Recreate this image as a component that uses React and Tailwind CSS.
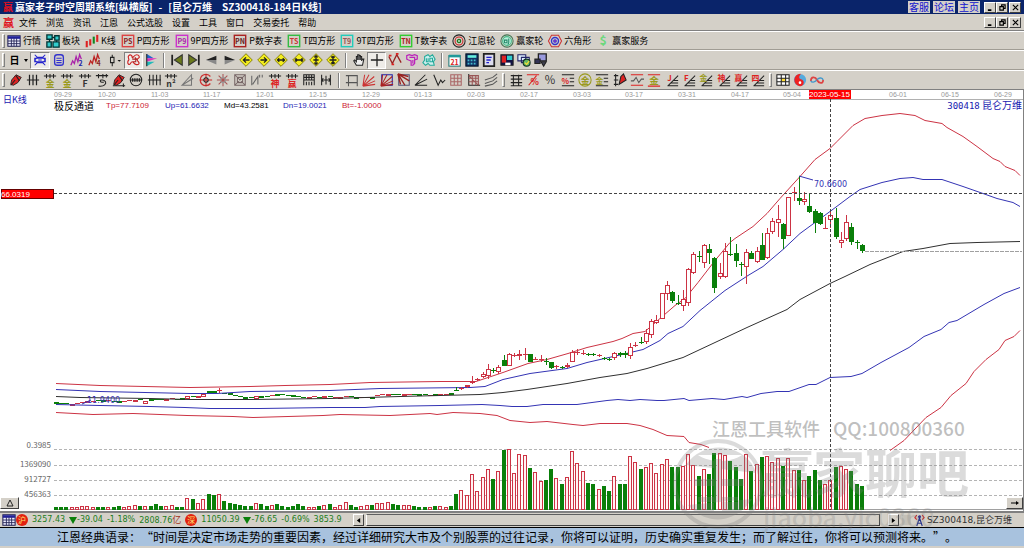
import clsx from 'clsx';

const RED = '#cc3344';
const GREEN = '#0a7f0a';
const BLUE = '#3434b4';

/* ---------- data ---------- */

const MENU = ['文件', '浏览', '资讯', '江恩', '公式选股', '设置', '工具', '窗口', '交易委托', '帮助'];

// volume per bar: positive = up day, negative = down day
const VOLUME = [
  -7, -7, -6, 7, 7, 9, 9, 7, -7, -7, 7, -5, -10, 7, 8, 12, -9, 9, -10, -15, -8, 8, 12, -6, -6,
  32, -30, 18, 30, -44, -42, 44, -24, -17, -14, -11, -9, -8, 18, -15, -10, 12, -16, -10, -7, -10,
  -15, -8, 7, 7, -9, 11, -15, 6, 11, 21, -11, -7, 8, 12, -13, 18, 18, 21, -16, -13, 12, 12, -10,
  -7, -5, 6, -8, 10, 7, -10, -46, 58, 43, 106, 55, 97, 119, -89, 115, -176, 181, 109, 166, 163,
  -124, 112, 85, -86, -119, 94, -74, 97, 173, 139, 115, -79, -74, 61, -70, -53, 100, -74, -74,
  158, 142, -119, 127, 137, 109, 134, 151, -127, -127, 129, 165, 132, -98, 120, -106, -169, 168,
  163, -144, -127, -90, 166, -115, 134, -157, 159, 141, 154, -128, 153, 118, -116, 88, -98, -118,
  -88, 76, 87, -125, 128, 120, -115, -76, -69,
];

// the sideways stretch, one level per bar
const FLAT = [
  697, 698, 700, 701, 698, 695, 694, 693, 691, 690, 690, 692, 693, 694, 691, 689, 687, 694, 688,
  686, 686, 686, 684, 687, 685, 679, 677, 678, 673, 664, 664, 661, 668, 670, 674, 677, 680, 681,
  678, 678, 677, 675, 671, 673, 674, 675, 677, 682, 681, 679, 680, 679, 678, 680, 681, 677, 678,
  680, 680, 680, 681, 676, 672, 673, 671, 671, 671, 671, 672, 672, 673, 675, 673, 672, 671, 670,
];

// high, body top, body bottom, low
const CANDLES = [
  [652, 661, 663, 664], [650, 653, 658, 659], [644, 646, 652, 653], [619, 632, 640, 642],
  [624, 627, 631, 632], [607, 613, 620, 624], [583, 598, 619, 626], [593, 599, 602, 610],
  [585, 591, 605, 612], [554, 571, 587, 588], [548, 553, 587, 588], [548, 555, 557, 562],
  [540, 552, 557, 571], [533, 553, 555, 570], [552, 553, 575, 576], [560, 566, 568, 570],
  [555, 567, 569, 575], [565, 572, 576, 585], [575, 577, 593, 596], [584, 587, 590, 596],
  [587, 591, 593, 596], [580, 584, 592, 594], [540, 546, 575, 577], [538, 547, 549, 555],
  [540, 548, 552, 556], [548, 552, 554, 558], [550, 553, 555, 558], [553, 556, 558, 560],
  [560, 564, 566, 570], [564, 568, 570, 572], [545, 550, 564, 570], [546, 550, 555, 560],
  [542, 550, 555, 563], [520, 532, 557, 568], [515, 525, 528, 531], [502, 515, 518, 522],
  [478, 490, 517, 521], [447, 454, 496, 503], [436, 450, 458, 462], [368, 370, 446, 448],
  [333, 346, 373, 390], [364, 365, 394, 398], [376, 399, 401, 405], [360, 388, 408, 423],
  [295, 298, 400, 408], [247, 253, 310, 312], [243, 259, 262, 277], [222, 224, 280, 293],
  [222, 238, 250, 282], [262, 265, 353, 370], [278, 308, 322, 328], [220, 242, 322, 323],
  [200, 252, 256, 258], [223, 250, 273, 290], [277, 281, 285, 318], [238, 247, 292, 343],
  [244, 248, 266, 268], [232, 244, 277, 278], [190, 225, 270, 271], [173, 190, 265, 266],
  [144, 152, 187, 193], [105, 148, 158, 200], [160, 163, 206, 237], [80, 82, 198, 199],
  [50, 66, 68, 92], [18, 84, 94, 104], [66, 87, 95, 106], [72, 107, 127, 130],
  [117, 123, 160, 190], [125, 129, 162, 165], [142, 173, 175, 178], [120, 136, 151, 175],
  [115, 144, 200, 208], [185, 210, 218, 235], [136, 156, 208, 212], [158, 170, 215, 225],
  [210, 217, 220, 236], [222, 226, 243, 250],
];

const barX = i => Math.round(55.7 + i * 5.27);
const priceY = v => Math.round(170 + v / 3);

const CURVES = [
  { id: 'Tp', color: RED, points: '56,383 100,385 190,387 250,386 285,385 330,384 370,382 440,381 476,381 503,372 528,363 547,359 568,353 587,347 613,341 622,338 633,333 645,331 660,318 675,305 685,298 698,282 715,260 730,242 735,238 753,226 767,213 780,198 800,176 815,159 830,148 837,141 853,125 865,118 882,115 900,113 915,115 925,120 942,123 947,127 963,136 977,146 993,158 1000,161 1005,166 1015,170 1020,175' },
  { id: 'Up', color: BLUE, points: '56,389 100,391 190,393 217,393 250,391 330,390 380,388 470,387 485,386 503,379 530,373 567,368 587,362 622,354 643,349 660,340 668,333 683,326 700,310 725,290 748,275 763,266 783,249 800,233 830,211 850,196 860,189 882,182 900,178 913,177 923,179 942,179 963,186 983,193 997,198 1013,202 1020,206' },
  { id: 'Md', color: '#303030', points: '56,396 80,397 150,398 190,399 250,399 330,398 400,396 480,394 503,392 527,389 567,383 600,377 627,373 647,368 683,357 747,327 787,309 800,299 830,283 845,276 870,264 903,251 923,248 950,243 977,242 1020,241' },
  { id: 'Dn', color: BLUE, points: '56,404 100,405 150,406 185,407 210,408 260,408 330,407 365,407 380,406 440,405 482,404 500,405 512,406 527,406 543,404 577,404 607,400 618,399 630,400 640,399 657,400 664,400 684,398 689,400 712,398 724,399 742,396 747,397 761,393 777,391 789,391 809,384 816,384 830,377 851,376 862,373 881,362 909,347 924,336 941,329 949,322 957,320 984,304 1004,293 1020,287' },
  { id: 'Bt', color: RED, points: '56,412 93,414 133,413 187,415 233,416 253,417 323,415 340,414 390,415 410,414 430,413 437,414 453,412 480,413 497,415 510,420 530,422 547,421 573,424 583,425 600,423 627,423 640,425 653,429 667,435 684,436 689,442 701,444 709,447' },
  { id: 'Bt2', color: RED, points: '890,450 904,440 926,417 941,407 951,395 966,383 974,371 986,359 999,349 1005,340 1014,336 1020,330' },
];

const DATES = [
  [54, '09-29'], [98, '10-20'], [151, '11-03'], [203, '11-17'], [256, '12-01'], [309, '12-15'],
  [362, '12-29'], [414, '01-13'], [467, '02-03'], [520, '02-17'], [573, '03-03'], [625, '03-17'],
  [678, '03-31'], [731, '04-17'], [783, '05-04'], [889, '06-01'], [941, '06-15'], [994, '06-29'],
];

const VOL_TICKS = [[449, '0.3985'], [465, '1369090'], [480, '912727'], [495, '456363']];

/* ---------- icons ---------- */

function Ico({ children }) {
  return (
    <svg viewBox="0 0 16 16" className="size-[14px] shrink-0 overflow-visible" fill="none" stroke="#222" strokeWidth="1.2">
      {children}
    </svg>
  );
}

function Glyph({ x = 8, y = 15, size = 9, fill = '#d22', children }) {
  return (
    <text x={x} y={y} fontSize={size} fill={fill} stroke="none" textAnchor="middle" fontWeight="700">{children}</text>
  );
}

const tagIcon = (label, color, ink) => (
  <Ico>
    <rect x="1.5" y="1.5" width="13" height="13" stroke={color} strokeWidth="1.6" />
    <Glyph y={11.5} size={8} fill={ink}>{label}</Glyph>
  </Ico>
);
const diamond = d => (
  <Ico>
    <path d="M8 .8L15.2 8 8 15.2.8 8z" fill="#f4ee1e" stroke="#7a7400" strokeWidth="1" />
    <path d={d} stroke="#222" strokeWidth="1.5" />
  </Ico>
);
const topRule = (ch, fill) => (
  <Ico>
    <path d="M1 3.5h14M4 1v5M8 1v5M12 1v5" />
    <Glyph y={15.5} size={10} fill={fill}>{ch}</Glyph>
  </Ico>
);
const slanted = (ch, fill) => (
  <Ico>
    <path d="M3 15L15 3M4 14.5h11M7 11.5h8M10 8.500h5" />
    <Glyph x={5} y={9} size={9} fill={fill}>{ch}</Glyph>
  </Ico>
);
const pen = (
  <>
    <path d="M2 13l1-5 5-6 6 3-4 6-5 3z" fill="#d22" stroke="#222" strokeWidth="1" />
    <path d="M2 14l5-6M8 3l4 6" />
  </>
);
const fan = 'M1 15L3 2M1 15L8 2M1 15L14 4M1 15L15 9M1 15L15 13';

const PAGE_BAR = [
  ['行情', <Ico key="i"><rect x="1" y="2" width="14" height="12" fill="#eef" stroke="#225" /><path d="M1 4h14" stroke="#229" strokeWidth="3" /><path d="M1 8h14M1 11h14M5 5v9M8 5v9M11 5v9" stroke="#225" strokeWidth="1" /></Ico>],
  ['板块', <Ico key="i"><path d="M1 1h6v5H1zM10 2h5v5h-5zM1 9h5v6H1zM8 9h7v6H8z" fill="#3cc" stroke="#033" strokeWidth="1.500" /><path d="M7 4h3M4 6v3M12 7v2" stroke="#033" strokeWidth="1.500" /></Ico>],
  ['K线', <Ico key="i"><path d="M2 8v7M6 6v7" stroke="#d22" strokeWidth="2.400" /><path d="M10 3v8" stroke="#182" strokeWidth="2.400" /><path d="M14 1v8" stroke="#d22" strokeWidth="2.400" /></Ico>],
  ['P四方形', tagIcon('PS', '#d44', '#822')],
  ['9P四方形', tagIcon('P9', '#c3c', '#a2a')],
  ['P数字表', tagIcon('PN', '#a22', '#622')],
  ['T四方形', tagIcon('TS', '#3b4', '#c33')],
  ['9T四方形', tagIcon('T9', '#2cb', '#955')],
  ['T数字表', tagIcon('TN', '#3c3', '#a22')],
  ['江恩轮', <Ico key="i"><circle cx="8" cy="8" r="7" /><circle cx="8" cy="8" r="4.500" stroke="#c22" /><circle cx="8" cy="8" r="2" stroke="#161" fill="#9c9" /></Ico>],
  ['赢家轮', <Ico key="i"><circle cx="8" cy="8" r="7" stroke="#475" /><circle cx="8" cy="8" r="5" stroke="#4b8" fill="#bed" /><path d="M5 7h3v3H5zM10 5v5l-1 2" stroke="#286" /></Ico>],
  ['六角形', <Ico key="i"><path d="M4 1.500h8L15.500 8 12 14.500H4L.5 8z" stroke="#c33" /><circle cx="8" cy="8" r="4" stroke="#33c" strokeWidth="1.600" /><circle cx="8" cy="8" r="1.500" fill="#c3c" stroke="#33c" /></Ico>],
  ['赢家服务', <Ico key="i"><Glyph y={13} size={14} fill="#6cd87c">$</Glyph></Ico>],
];

const NAV_GROUPS = [
  {
    width: 'w-[74px]',
    items: [
      ['指标窗口', <Ico key="i"><path d="M2 2l3 3h6l3-3M2 14l3-3h6l3 3M2 6v4h12V6zM5 5L2 8M11 5l3 3M6 8h4M5 11l-3-3M11 11l3-3" stroke="#22c" strokeWidth="1.200" /></Ico>, true],
      ['资料', <Ico key="i"><rect x="3" y="2" width="10" height="12" rx="3" stroke="#33c" strokeWidth="1.500" /><path d="M5 6h6M5 8.500h6M5 11h6" stroke="#33c" /></Ico>],
      ['二波段', <Ico key="i"><path d="M1 14l2-5 2 3 2-8 2 6 2-8 2 5" stroke="#a2a" strokeWidth="1.500" /><Glyph x={12} y={15} size={8} fill="#22a">2</Glyph></Ico>],
      ['四波段', <Ico key="i"><path d="M1 14l2-5 2 3 2-8 2 6 2-8 2 5" stroke="#b22" strokeWidth="1.500" /><Glyph x={12} y={15} size={8} fill="#822">4</Glyph></Ico>],
    ],
  },
  { width: 'w-[20px]', items: [['K线样式', <Ico key="i"><path d="M6 2v3M6 11v4M4 5h4v6H4z" /><path d="M12 8h4l-2 2z" fill="#111" stroke="none" /></Ico>]] },
  {
    width: 'w-[36px]',
    items: [
      ['极反通道', <Ico key="i"><path d="M2 3c2-2 4 0 4 2s2-3 5-3 4 3 2 4-2 2 0 4 0 4-3 3-2-3-4-3-2 4-4 3-1-4 0-5-2-3 0-5z" stroke="#c22" strokeWidth="1.300" /><path d="M6 7h4v3H7M9 5l3 3" stroke="#a22" /></Ico>, true],
      ['筹码分布', <Ico key="i"><path d="M2 1l8 5H2z" fill="#26c" stroke="none" /><path d="M2 6h12L2 10z" fill="#d3b" stroke="none" /><path d="M2 10h9l-9 5z" fill="#2bb" stroke="none" /><path d="M2 1v14" /></Ico>],
    ],
  },
  {
    width: 'w-[174px]',
    lead: true,
    items: [
      ['首页', <Ico key="i"><path d="M14 2v12L5 8z" fill="#6b7a1c" stroke="#333" /><path d="M2.500 2v12" strokeWidth="2" /></Ico>],
      ['末页', <Ico key="i"><path d="M2 2v12l9-6z" fill="#6b7a1c" stroke="#333" /><path d="M13.500 2v12" strokeWidth="2" /></Ico>],
      ['左移', <Ico key="i"><path d="M13 3v5H1z" fill="#222" stroke="none" /><path d="M1 8h12v5z" fill="#888" stroke="none" /></Ico>],
      ['右移', <Ico key="i"><path d="M3 3v5h12z" fill="#222" stroke="none" /><path d="M15 8H3v5z" fill="#888" stroke="none" /></Ico>],
      ['左一格', diamond('M12 8H5M8 5L5 8l3 3')],
      ['右一格', diamond('M4 8h7M8 5l3 3-3 3')],
      ['横向放大', diamond('M3.500 8h9M6 6L4 8l2 2M10 6l2 2-2 2')],
      ['横向缩小', diamond('M3 8h10M4 6l2 2-2 2M12 6l-2 2 2 2')],
      ['纵向放大', diamond('M8 3v10M6 5l2-2 2 2M6 11l2 2 2-2M5 8h6')],
      ['纵向缩小', diamond('M8 3v10M6 4l2 2 2-2M6 12l2-2 2 2M4 8h8')],
    ],
  },
  {
    width: 'w-[88px]',
    lead: true,
    items: [
      ['拖动', <Ico key="i"><path d="M5 14L2 9l1-1 2 2V4h1.500v4V2H8v6V3h1.500v5V4H11v5l1-2h1.500L12 14z" fill="#eee" /></Ico>],
      ['十字光标', <Ico key="i"><path d="M8 1v14M1 8h14" strokeWidth="1.500" /></Ico>, true],
      ['折线', <Ico key="i"><path d="M1 4l4 8 5-10 5 9" stroke="#922" strokeWidth="1.500" /><path d="M1 3h3M4 13h3M9 1h3" stroke="#d22" strokeWidth="2" /></Ico>],
      ['形态', <Ico key="i"><path d="M2 3l3-1 3 1 3-1 3 1v4l-3 1v4l-2 2H7V9L4 8 2 7zM5 5h6v2M9 8v4" stroke="#b2b" strokeWidth="1.400" /></Ico>],
      ['叠加', <Ico key="i"><path d="M3 4l4-2 2 2 3-2 3 5-2 3 1 4H9l-2-2-3 2-3-3 2-3z" stroke="#2a9" fill="#cee" /><path d="M5 6v4h2V6M9 6h3v4H9z" stroke="#2a9" /></Ico>],
    ],
  },
  {
    width: 'w-[104px]',
    lead: true,
    items: [
      ['日历', <Ico key="i"><rect x="1" y="3" width="13" height="12" fill="#fff" stroke="#277" /><path d="M1 3.500h13" stroke="#299" strokeWidth="3" /><Glyph x={7.5} y={13.5} size={8}>21</Glyph></Ico>],
      ['计算器', <Ico key="i"><rect x="1" y="1" width="14" height="14" fill="#136" stroke="#012" /><path d="M3 4h10" stroke="#6ed" strokeWidth="3" /><path d="M3 8.500h10M3 12h10" stroke="#4bc" strokeWidth="2" strokeDasharray="2 1.500" /></Ico>],
      ['笔记', <Ico key="i"><rect x="2" y="1" width="12" height="14" fill="#dde" strokeWidth="2" /><path d="M5 5h6M5 8h5M5 11h3" stroke="#22c" strokeWidth="1.500" /></Ico>],
      ['保存', <Ico key="i"><path d="M1 2h14v12H1z" fill="#114" /><path d="M2 3h5v8H2z" fill="#d22" stroke="none" /><path d="M8 3h6v5H8z" fill="#3cc" stroke="none" /><path d="M6 11h6v3H6z" fill="#fff" stroke="none" /></Ico>],
      ['导出', <Ico key="i"><path d="M1 2h9v7H1zM5 5h9v6H5z" fill="#def" stroke="#226" /><circle cx="11" cy="11" r="4" fill="#6b6" stroke="#132" /><path d="M9 11l2 2 3-4" stroke="#fd3" /></Ico>],
      ['远程', <Ico key="i"><path d="M5 1h9v8H5z" fill="#99d" strokeWidth="1.500" /><path d="M1 7h6v5H1z" fill="#335" /><path d="M8 10h6l-3 5z" fill="#445" /></Ico>],
    ],
  },
];

const DRAW_GROUPS = [
  {
    width: 'w-[328px]',
    items: [
      ['画笔', <Ico key="i">{pen}</Ico>],
      ['等分线', <Ico key="i"><path d="M1 8h14M4 2v12M8 2v12M12 2v12" strokeWidth="1.400" /></Ico>],
      ['黄金分割', topRule('金', '#9a9a1e')],
      ['黄金周期', topRule('金', '#9a9a1e')],
      ['斐波那契', topRule('F', '#333')],
      ['螺旋', <Ico key="i"><path d="M1 3h14M4 1v5M9 1v5M13 1v4M4 15c7 1 9-3 8-5S6 7 6 9s4 2 4 1" /></Ico>],
      ['标注', <Ico key="i">{pen}<path d="M1 14.500h14M13 12v4" /></Ico>],
      ['圆周', <Ico key="i"><circle cx="8" cy="8" r="6.500" /><path d="M1 8h14M4 6v4M6 6v4M8 6v4M10 6v4M12 6v4" /></Ico>],
      ['周期线', <Ico key="i"><path d="M1 8h15M3 2v12M7 2v12M11 2v12M15 2v12" /></Ico>],
      ['平方', topRule('n²', '#333')],
      ['三角', <Ico key="i"><path d="M1 14L12 2v12zM1 14l13-8" stroke="#777" /></Ico>],
      ['江恩圆', <Ico key="i"><path d="M13 12a6.500 6.500 0 110-8" stroke="#c33" strokeWidth="1.400" /><path d="M1 8h14M8 1v14" stroke="#c22" /><circle cx="8" cy="8" r="2.500" /></Ico>],
      ['星形', <Ico key="i"><path d="M8 1v14M1 8h14M3 3l10 10M13 3L3 13" stroke="#a55" /><circle cx="8" cy="8" r="3" stroke="#999" /></Ico>],
      ['方形', <Ico key="i"><path d="M2 2h12v12H2zM5 5h6v6H5zM2 2l12 12M14 2L2 14" stroke="#766" /></Ico>],
      ['波浪', <Ico key="i"><path d="M2 14V3M3 13l6-9v9M11 2v3M14 2v3" stroke="#666" /></Ico>],
      ['神数', topRule('神', '#d22')],
      ['赢数', topRule('赢', '#d22')],
      ['箱体', <Ico key="i"><path d="M2 14V2h12v12M2 8h12M2 5h12M5 2v6M8 2v6M11 2v6M5 10v4M8 10v4M11 10v4" /></Ico>],
      ['间距', <Ico key="i"><path d="M3 2v12M13 2v12M8 3v10M3 8h10M5 6L3 8l2 2M11 6l2 2-2 2" /></Ico>],
    ],
  },
  {
    width: 'w-[157px]',
    lead: true,
    items: [
      ['矩形', <Ico key="i"><path d="M4 3h10v8H4zM1 3h3M4 11v4M1 11h3M14 11v4" stroke="#555" /></Ico>],
      ['扇形线', <Ico key="i"><path d={fan} stroke="#c33" /></Ico>],
      ['速阻线', <Ico key="i"><path d="M2 2h12v12H2z" stroke="#22a" /><path d={fan} stroke="#a22" /></Ico>],
      ['反向扇形', <Ico key="i"><path d="M2 2h12v12H2z" stroke="#557" /><path d="M1 1l12 3M1 1l13 8M1 1l8 13M1 1l3 12" stroke="#922" strokeWidth="1.600" /></Ico>],
      ['角度线', <Ico key="i"><path d="M1 14L13 2M1 14L15 7M1 14h14" /></Ico>],
      ['折返', <Ico key="i"><path d="M2 2l5 12 3-6 2 3 3-3" /></Ico>],
      ['网格', <Ico key="i"><path d="M2 2h12v12H2zM6 2v12M10 2v12M2 6h12M2 10h12" stroke="#a66" /></Ico>],
      ['斜网格', <Ico key="i"><path d="M2 1v13h13" /><path d="M2 3h11v11M6 3v11M10 3v11M2 6h11M2 10h11M2 3l11 11" stroke="#955" /></Ico>],
      ['平行线', <Ico key="i"><path d="M1 8l9-3 5-4M1 12l9-3 5-4M1 15l9-2 5-4" stroke="#555" /></Ico>],
    ],
  },
  {
    width: 'w-[260px]',
    grip: true,
    items: [
      ['水平等分', <Ico key="i"><path d="M2 3h13M2 7h13M2 11h13M2 14.500h13M5 2v13M11 2v13" /></Ico>],
      ['百分比线', <Ico key="i"><path d="M1 2h14M3 14L12 3" stroke="#d22" /><Glyph x={10} y={14} size={10}>%</Glyph></Ico>],
      ['百分比', <Ico key="i"><text x="8" y="13" fontSize="13" fill="#333" stroke="none" textAnchor="middle">%</text></Ico>],
      ['百分回撤', <Ico key="i"><path d="M1 2h14M10 6h5M10 10h5M1 14.500h14" /><Glyph x={5} y={12} size={9}>%</Glyph></Ico>],
      ['黄金圆', <Ico key="i"><circle cx="8" cy="8" r="7" stroke="#9a9a1e" /><Glyph y={12} size={10} fill="#9a9a1e">金</Glyph></Ico>],
      ['黄金回撤', <Ico key="i"><path d="M1 2h14M10 6h5M10 10h5M1 14.500h14" /><Glyph x={5} y={12} size={9} fill="#9a9a1e">金</Glyph></Ico>],
      ['标尺', <Ico key="i"><path d="M3 1v14M1 3h5M1 8h5M1 13h5" /><path d="M7 13l2-9 3-3 3 7z" fill="#d22" /></Ico>],
      ['波动', <Ico key="i"><path d="M1 2h14M1 14h14" stroke="#d22" /><path d="M1 9h3l3-4 3 6 3-4h3" stroke="#555" /></Ico>],
      ['黄金区间', <Ico key="i"><path d="M1 2h14M1 15h14" stroke="#d22" /><Glyph y={13} size={11} fill="#9a9a1e">金</Glyph></Ico>],
      ['J线', slanted('J', '#d22')],
      ['F线', slanted('F', '#d22')],
      ['金线', slanted('金', '#9a9a1e')],
      ['神线', slanted('神', '#d22')],
      ['赢线', slanted('赢', '#d22')],
      ['四线', slanted('四', '#d22')],
    ],
  },
  {
    width: 'w-[52px]',
    grip: true,
    items: [
      ['表格', <Ico key="i"><path d="M1 2h14v12H1z" fill="#fff" /><path d="M6 6h5v4H6z" fill="#fd3" stroke="none" /><path d="M1 6h14M1 10h14M6 2v12M11 2v12" /></Ico>],
      ['太极', <Ico key="i"><circle cx="8" cy="8" r="7" fill="#5ad" stroke="none" /><path d="M9 1a7 7 0 10-1 14c5 0 6-7 1-8-3-1-2-4 0-6z" fill="#e22" stroke="none" /><circle cx="8" cy="11" r="1.500" fill="#fff" stroke="none" /></Ico>],
      ['无限', <Ico key="i"><path d="M8 8C6 4 1 4 1 9" stroke="#d44" strokeWidth="2" /><path d="M8 8c1-2 6-4 7 0" stroke="#49c" strokeWidth="1.600" /><path d="M1 9c1 2 4 2 7-1" stroke="#49c" strokeWidth="1.600" /><path d="M8 8c2 4 7 5 7 0" stroke="#d44" strokeWidth="2" /></Ico>],
    ],
  },
];

/* ---------- chrome ---------- */

const WinButton = ({ label, children }) => (
  <button
    aria-label={label}
    className="flex h-[11px] w-[12px] items-center justify-center border border-t-white border-r-[#404040] border-b-[#404040] border-l-white bg-[#d4d0c8]"
  >
    <svg viewBox="0 0 8 8" className="size-[7px]" fill="none" stroke="#000" strokeWidth="1.3">{children}</svg>
  </button>
);

function WinButtons() {
  return (
    <div className="flex">
      <WinButton label="最小化"><path d="M1 7h4" strokeWidth="2" /></WinButton>
      <WinButton label="还原"><path d="M3 3V1h4v4H5M1 3h4v4H1z" /></WinButton>
      <div className="w-px" />
      <WinButton label="关闭"><path d="M1 1l6 6M7 1L1 7" /></WinButton>
    </div>
  );
}

const Grip = () => <div className="mr-0.5 h-[14px] w-[3px] shrink-0 border border-t-white border-r-[#808080] border-b-[#808080] border-l-white" />;

function IconGroup({ group }) {
  return (
    <>
      {group.lead && <div className="mx-[3px] h-[15px] w-[2px] shrink-0 border-r border-l border-r-white border-l-[#808080]" />}
      {group.grip && <div className="ml-[2px] flex shrink-0"><Grip /></div>}
      <div className={clsx('flex shrink-0', group.width)}>
        {group.items.map(([label, icon, pressed]) => (
          <button
            key={label}
            aria-label={label}
            aria-pressed={!!pressed}
            className={clsx(
              'flex h-[17px] min-w-0 flex-1 items-center justify-center',
              pressed && 'border border-t-[#808080] border-r-white border-b-white border-l-[#808080] bg-[#eeece8]',
            )}
          >
            {icon}
          </button>
        ))}
      </div>
    </>
  );
}

function Header() {
  return (
    <header className="bg-[#d4d0c8]">
      <div className="flex h-[14px] items-center bg-[#0a246a] px-[3px] text-[10px] font-bold text-white">
        <span className="w-3 text-[10px] text-[#e01020]">赢</span>
        <h1 className="flex gap-[6px] whitespace-nowrap">
          <span>赢家老子时空周期系统[纵横版]</span>
          <span>-</span>
          <span>[昆仑万维</span>
          <span className="ml-1">SZ300418-184日K线]</span>
        </h1>
        <nav className="ml-auto flex gap-[3px] pr-1 font-normal">
          {['客服', '论坛', '主页'].map(t => (
            <a key={t} href="#" className="h-[12px] w-[22px] bg-[#d4d0c8] text-center leading-[12px] text-[#1010d0]">{t}</a>
          ))}
        </nav>
        <WinButtons />
      </div>
      <div className="flex h-[17px] items-center border-b border-[#808080] px-[3px] text-[9px]">
        <span className="w-4 text-[11px] font-bold text-[#e01020]">赢</span>
        <nav className="flex gap-[9px]">
          {MENU.map(m => <button key={m}>{m}</button>)}
        </nav>
        <div className="ml-auto"><WinButtons /></div>
      </div>
      <div className="flex h-[19px] items-center border-t border-b border-t-white border-b-[#a09c94] px-[2px] text-[9px]">
        <Grip />
        <div className="flex gap-[5px]">
          {PAGE_BAR.map(([label, icon]) => (
            <button key={label} className="flex items-center gap-[2px] whitespace-nowrap">{icon}{label}</button>
          ))}
        </div>
      </div>
      <div className="flex h-[20px] items-center border-t border-b border-t-white border-b-[#a09c94] px-[2px] text-[9px]">
        <Grip />
        <button className="flex w-[23px] items-center justify-center gap-1 text-[10px] font-bold">
          日
          <svg viewBox="0 0 4 3" className="h-[3px] w-[4px]"><path d="M0 0h4L2 3z" /></svg>
        </button>
        {NAV_GROUPS.map(g => <IconGroup key={g.items[0][0]} group={g} />)}
      </div>
      <div className="flex h-[20px] items-center border-t border-b border-t-white border-b-[#808080] px-[2px] text-[9px]">
        <Grip />
        {DRAW_GROUPS.map(g => <IconGroup key={g.items[0][0]} group={g} />)}
      </div>
    </header>
  );
}

/* ---------- chart ---------- */

function Candle({ x, up, high, top, bottom, low }) {
  const color = up ? RED : GREEN;
  const h = Math.max(bottom - top, 1);
  return (
    <g>
      <path d={`M${x + 0.5} ${high}V${top}M${x + 0.5} ${bottom}V${low}`} stroke={color} />
      {up && h > 2
        ? <rect x={x - 1.5} y={top + 0.5} width="4" height={h - 1} fill="#fff" stroke={color} />
        : <rect x={x - 2} y={top} width="5" height={h} fill={color} />}
    </g>
  );
}

function Chart() {
  return (
    <svg viewBox="0 90 1024 421" className="block h-auto w-full bg-white" fontSize="8" role="img" aria-label="昆仑万维 日K线">
      <g shapeRendering="crispEdges">
        <path d="M54 99.500H1024" stroke="#b0b0b0" />
        {VOL_TICKS.map(([y]) => (
          <path key={y} d={`M54 ${y + 0.5}H1022`} stroke="#b4b4b4" strokeDasharray="3 2" />
        ))}
        <path d="M54 509.500H1024" stroke="#a0a0a0" />
        {VOLUME.map((v, i) => {
          const h = Math.round(Math.abs(v) / 3);
          return v > 0
            ? <rect key={i} x={barX(i) - 1.5} y={509.5 - h} width="3" height={h} fill="#fff2f2" stroke={RED} />
            : <rect key={i} x={barX(i) - 2} y={509 - h} width="4" height={h + 1} fill={GREEN} />;
        })}
        {FLAT.map((v, i) => {
          const y = priceY(v);
          const h = [17, 25, 28, 29, 38].includes(i) ? 3 : 1 + (i % 3 === 0);
          return <Candle key={i} x={barX(i)} up={VOLUME[i] > 0} high={i === 31 ? y - 2 : y} top={y} bottom={y + h} low={i === 31 ? y + 3 : y + h} />;
        })}
      </g>

      {CURVES.map(c => (
        <polyline key={c.id} points={c.points} fill="none" stroke={c.color} transform="translate(0 .5)" />
      ))}

      <g shapeRendering="crispEdges">
        {CANDLES.map(([high, top, bottom, low], i) => (
          <Candle
            key={i}
            x={barX(i + FLAT.length)}
            up={VOLUME[i + FLAT.length] > 0}
            high={priceY(high)}
            top={priceY(top)}
            bottom={priceY(bottom)}
            low={priceY(low)}
          />
        ))}
        <path d="M865 251.500H1022" stroke="#a0a0a0" strokeDasharray="4 1" />
        <path d="M54 193.500H1022M830.500 99V510" stroke="#444" strokeDasharray="3 2" />
        <path d="M1023.500 90V511" stroke="#808080" />
        <rect x="1" y="189" width="52" height="9" fill="#f00" stroke="#600" />
        <rect x="809" y="90" width="42" height="9" fill="#f00" />
      </g>
      <path d="M799 176l14 4M82 404l9-4" stroke={BLUE} fill="none" />

      <g fontFamily="Liberation Sans">
        <g fontSize="7" fill="#999">
          {DATES.map(([x, t]) => <text key={x} x={x} y="97">{t}</text>)}
        </g>
        <text x="809" y="97" fill="#fff">2023-05-15</text>
        <text x="1" y="197" fill="#fff">66.0319</text>
      </g>
      <g fill="#666" textAnchor="end">
        {VOL_TICKS.map(([y, t], i) => <text key={t} x="51" y={i ? y + 2 : y - 1}>{t}</text>)}
      </g>
      <g fill={BLUE}>
        <g fontFamily="DejaVu Sans">
          <text x="814" y="187">70.6600</text>
          <text x="87" y="403">11.9400</text>
        </g>
        <text x="3" y="103" fontSize="9" fill="#1818b0">日K线</text>
        <text x="1022" y="109" fontSize="10" textAnchor="end" fill="#1818b0">
          <tspan fontSize="9" fontFamily="DejaVu Sans Mono">300418</tspan> 昆仑万维
        </text>
      </g>
    </svg>
  );
}

const LEGEND = [
  ['Tp=77.7109', 'text-[#cc2233]'],
  ['Up=61.6632', 'text-[#2424b4]'],
  ['Md=43.2581', 'text-black'],
  ['Dn=19.0021', 'text-[#2424b4]'],
  ['Bt=-1.0000', 'text-[#cc2233]'],
];

function ChartPanel() {
  return (
    <main className="relative">
      <Chart />
      <div className="absolute top-[10px] left-[54px] flex h-3 items-center text-[10px]">
        <span className="w-[52px]">极反通道</span>
        {LEGEND.map(([t, tone]) => (
          <span key={t} className={clsx("w-[59px] font-['Liberation_Sans'] text-[8px]", tone)}>{t}</span>
        ))}
      </div>
      <button aria-label="展开" className="absolute bottom-[2px] left-0 flex h-[12px] w-[19px] items-center justify-center border border-t-white border-r-[#404040] border-b-[#404040] border-l-white bg-[#d4d0c8]">
        <svg viewBox="0 0 8 8" className="size-2" fill="none" stroke="#222"><path d="M4 1l3 6H1z" /></svg>
      </button>
      <button aria-label="向右" className="absolute right-px bottom-[2px] flex h-[12px] w-[17px] items-center justify-center border border-t-white border-r-[#404040] border-b-[#404040] border-l-white bg-[#d4d0c8]">
        <svg viewBox="0 0 10 8" className="h-2 w-[10px]" fill="none" stroke="#000"><path d="M1 4h6" /><path d="M6 2l3 2-3 2z" fill="#000" stroke="none" /></svg>
      </button>
    </main>
  );
}

/* ---------- bottom bars ---------- */

const Market = ({ mark, value, change, pct, amount, unit }) => (
  <div className="flex shrink-0 items-center gap-1">
    <span className="flex size-[12px] items-center justify-center rounded-full bg-[#e22010] font-['Noto_Sans_CJK_SC'] text-[8px] text-[#ffe070]">{mark}</span>
    <span>{value}</span>
    <span className="flex items-center">
      <svg viewBox="0 0 8 7" className="h-[7px] w-2"><path d="M0 0h8L4 7z" fill="#0a7f0a" /></svg>
      {change}
    </span>
    <span>{pct}</span>
    <span>{amount}{unit && <span className="font-['Noto_Sans_CJK_SC'] text-[9px] text-[#a03020]">{unit}</span>}</span>
  </div>
);

const ScrollArrow = ({ label, d }) => (
  <button aria-label={label} className="flex h-[12px] w-[11px] shrink-0 items-center justify-center border border-t-white border-r-[#404040] border-b-[#404040] border-l-white bg-[#d4d0c8]">
    <svg viewBox="0 0 6 6" className="size-[5px]"><path d={d} /></svg>
  </button>
);

function StatusBar() {
  return (
    <div className="flex h-[17px] items-center border-t-2 border-b border-t-[#808080] border-b-black bg-[#d4d0c8] pr-3 pl-[2px] font-['DejaVu_Sans'] text-[8px] text-[#1c7c1c]">
      <div className="flex w-[351px] shrink-0 items-center whitespace-nowrap">
        {PAGE_BAR[0][1]}
        <div className="flex gap-1">
          <Market mark="沪" value="3257.43" change="-39.04" pct="-1.18%" amount="2808.76" unit="亿" />
          <Market mark="深" value="11050.39" change="-76.65" pct="-0.69%" amount="3853.9" />
        </div>
      </div>
      <div className="flex flex-1 items-center gap-0.5">
        <ScrollArrow label="向左滚动" d="M5 0v6L1 3z" />
        <div className="h-[12px] flex-1 border border-t-[#606060] border-r-[#404040] border-b-[#404040] border-l-white bg-[#d4d0c8]" />
        <div className="w-1" />
        <ScrollArrow label="向右滚动" d="M1 0v6l4-3z" />
      </div>
      <div className="mr-[3px] ml-[3px] h-[10px] w-[9px] bg-[#c4c0b8]" />
      <div className="flex items-center gap-[2px] text-[#333]">
        <svg viewBox="0 0 12 14" className="h-[13px] w-[11px]" fill="none" stroke="#22308c" strokeWidth="1.2">
          <path d="M6 4L3 13M6 4l3 9M4 10h4M5 7h2" />
          <path d="M3 1L1 4l2 2M9 1l2 3-2 2" stroke="#c22" />
          <circle cx="6" cy="3" r="1" fill="#c22" />
        </svg>
        <span className="text-[9px]">
          SZ300418,<span className="font-['Noto_Sans_CJK_SC']">昆仑万维</span>
        </span>
      </div>
    </div>
  );
}

function Watermark() {
  return (
    <svg viewBox="0 0 360 135" className="pointer-events-none absolute right-0 bottom-0 h-[135px] w-[360px]" fill="#808080">
      <text x="48" y="23" fontSize="18" fontWeight="500" fillOpacity=".5">江恩工具软件</text>
      <text x="169" y="23" fontSize="19" fontWeight="500" fillOpacity=".5">QQ:100800360</text>
      <g opacity=".28">
        <circle cx="54" cy="71" r="43" fill="none" stroke="#808080" strokeWidth="4" />
        <path d="M22 52a38 34 0 0170 8M24 92c20 22 48 18 64-6M34 42c12 8 32 8 44 0M30 66h50v7H30zM50 46h8v54h-8zM34 84h40v5H34z" />
        <text x="97" y="80" fontSize="52" fontWeight="700">赢家聊吧</text>
      </g>
      <text x="99" y="114" fontSize="25" fontWeight="500" fillOpacity=".25">jiaoba.yic0360</text>
    </svg>
  );
}

export default function App() {
  return (
    <div lang="zh-CN" className="relative bg-[#d4d0c8] font-['Noto_Sans_CJK_SC',sans-serif] leading-none text-black">
      <Header />
      <ChartPanel />
      <StatusBar />
      <footer className="h-[20px] overflow-hidden border-b-2 border-[#d4d0c8] bg-[#a8c2de] pl-[57px] text-[12px] leading-[18px] whitespace-nowrap [text-spacing-trim:space-all]">
        江恩经典语录：“时间是决定市场走势的重要因素，经过详细研究大市及个别股票的过往记录，你将可以证明，历史确实重复发生；而了解过往，你将可以预测将来。”。
      </footer>
      <Watermark />
    </div>
  );
}
